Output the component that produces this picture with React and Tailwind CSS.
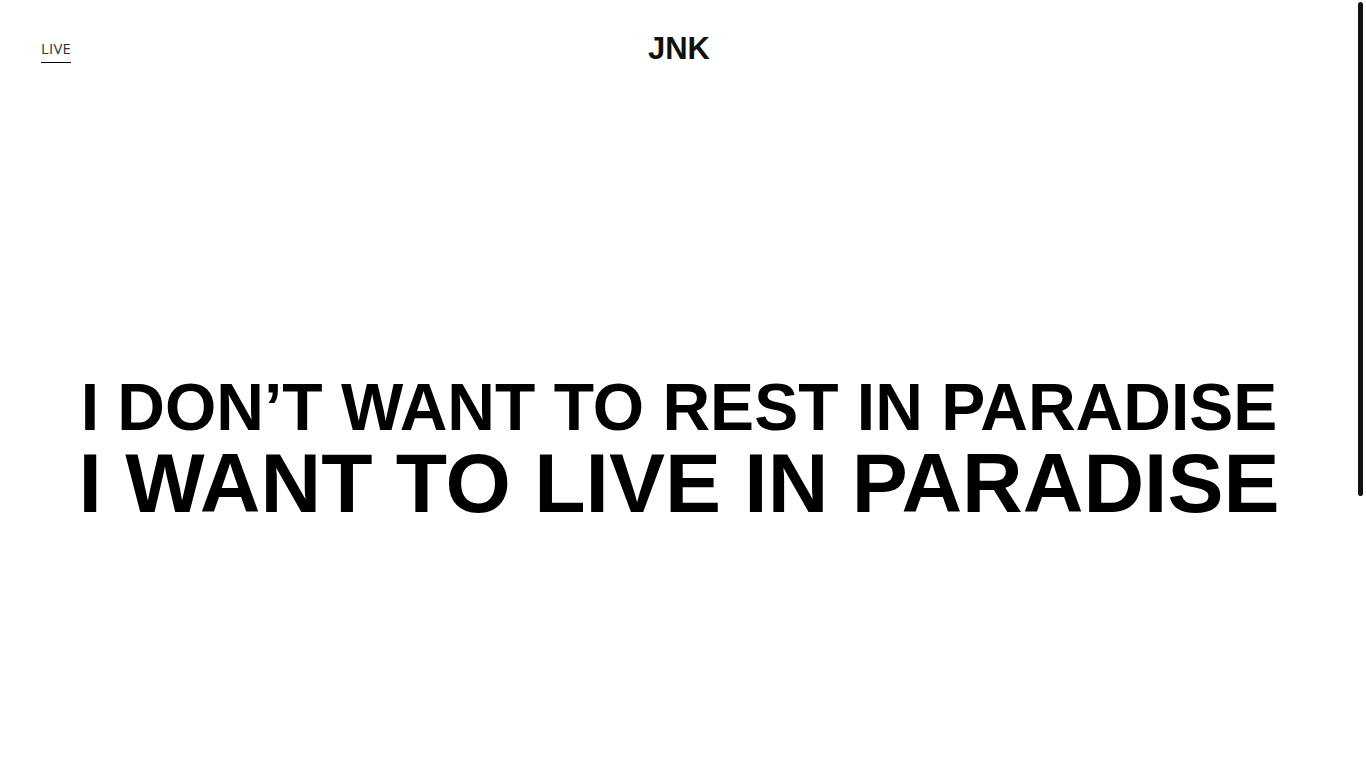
export default function App() {
  return (
    <div className="flex h-screen w-full overflow-hidden bg-white">
      <main className="flex-1 flex flex-col">
        <header className="grid grid-cols-3 items-start px-[41px] pt-[33px]">
          <div className="flex mt-[6px]">
            <a
              href="#"
              className="block border-b border-black pb-1 text-[15px] leading-[19px] tracking-[0.2px] text-[#333]"
              style={{ fontFamily: '"Open Sans", sans-serif' }}
            >
              LIVE
            </a>
          </div>
          <h1
            className="text-center text-[31px] leading-[31px] font-bold text-[#111]"
            style={{ fontFamily: '"Liberation Sans", Arial, sans-serif' }}
          >
            JNK
          </h1>
          <div />
        </header>

        <section
          className="flex flex-col items-center pt-[310px] font-bold text-black uppercase"
          style={{ fontFamily: '"Liberation Sans", Arial, sans-serif' }}
        >
          <p className="text-[66px] leading-[66px] whitespace-nowrap">
            I DON’T WANT TO REST IN PARADISE
          </p>
          <p className="mt-[1px] text-[84px] leading-[84px] whitespace-nowrap">
            I WANT TO LIVE IN PARADISE
          </p>
        </section>
      </main>

      {/* custom scrollbar track */}
      <aside className="w-2 h-screen pt-[2px]">
        <div className="w-[5px] h-[494px] rounded-full bg-[#111]" />
      </aside>
    </div>
  );
}
